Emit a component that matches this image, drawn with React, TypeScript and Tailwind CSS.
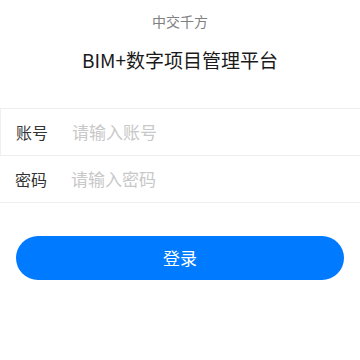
import React from "react";

export default function App() {
  return (
    <div
      className="w-[360px] h-[360px] bg-white flex flex-col"
      style={{ fontFamily: '"Noto Sans CJK SC", "Noto Sans", sans-serif' }}
    >
      <div className="pt-[11px] text-center text-[14px] leading-[20px] text-[#808080]">中交千方</div>
      <div className="mt-[16px] text-center text-[19px] leading-[26px] text-[#1a1a1a]">BIM+数字项目管理平台</div>
      <div className="mt-[35px] flex flex-col">
        <div className="h-[48px] flex items-center border-t border-b border-l border-[#eeeeee] pl-[15px]">
          <span className="w-[56px] text-[16px] text-[#333333]">账号</span>
          <input
            className="flex-1 outline-none text-[17px] placeholder:text-[#c8c8c8] bg-transparent"
            placeholder="请输入账号"
          />
        </div>
        <div className="h-[47px] flex items-center border-b border-[#eeeeee] pl-[15px]">
          <span className="w-[56px] text-[16px] text-[#333333]">密码</span>
          <input
            type="password"
            className="flex-1 outline-none text-[17px] placeholder:text-[#c8c8c8] bg-transparent"
            placeholder="请输入密码"
          />
        </div>
      </div>
      <button className="mt-[33px] mx-4 h-[44px] rounded-full bg-[#007aff] text-white text-[17px]">
        登录
      </button>
    </div>
  );
}
